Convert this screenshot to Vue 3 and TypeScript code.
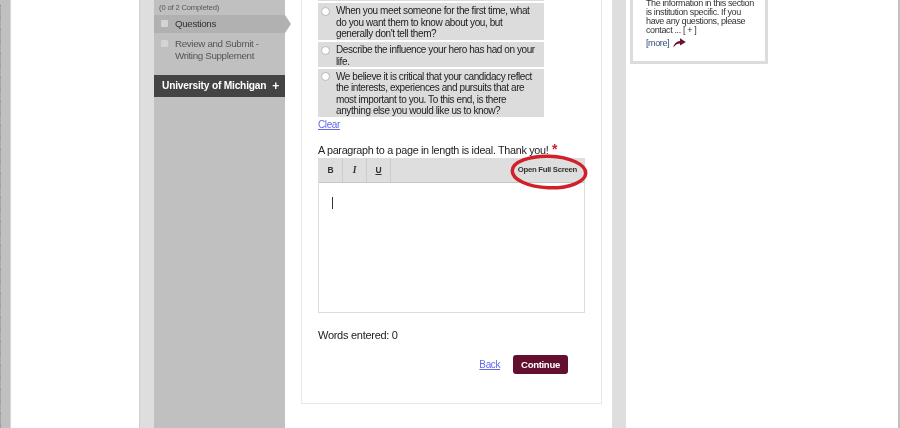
<script setup lang="ts">
const prompts: string[] = [
  'When you meet someone for the first time, what do you want them to know about you, but generally don\'t tell them?',
  'Describe the influence your hero has had on your life.',
  'We believe it is critical that your candidacy reflect the interests, experiences and pursuits that are most important to you. To this end, is there anything else you would like us to know?',
]
const tools = [
  { label: 'B', cls: 'bold' },
  { label: 'I', cls: 'italic' },
  { label: 'U', cls: 'under' },
]
</script>

<template>
  <div class="page">
    <div class="edge-left"></div>
    <div class="gutter"></div>
    <div class="rail"></div>

    <aside class="sidebar">
      <div class="completed">(0 of 2 Completed)</div>
      <div class="step active">
        <span class="check"></span>
        <span>Questions</span>
      </div>
      <div class="step">
        <span class="check"></span>
        <span>Review and Submit -<br />Writing Supplement</span>
      </div>
      <div class="school">
        <span>University of Michigan</span>
        <span class="plus">+</span>
      </div>
    </aside>

    <main class="main">
      <section class="card">
        <div class="options">
          <div v-for="p in prompts" :key="p" class="option">
            <span class="radio"></span>
            <span class="option-text">{{ p }}</span>
          </div>
        </div>
        <a class="clear" href="#">Clear</a>

        <div class="label">A paragraph to a page in length is ideal. Thank you! <span class="req">*</span></div>
        <div class="editor">
          <div class="toolbar">
            <button v-for="t in tools" :key="t.label" type="button" class="tool" :class="t.cls">{{ t.label }}</button>
            <span class="fullscreen">Open Full Screen</span>
            <svg class="circle" width="82" height="42" viewBox="0 0 82 42">
              <ellipse cx="41" cy="21" rx="36.75" ry="15.75" fill="none" stroke="#d0202a" stroke-width="3.5" transform="rotate(2 41 21)" />
            </svg>
          </div>
          <div class="editor-body"><span class="caret"></span></div>
        </div>

        <div class="words">Words entered: 0</div>
        <div class="actions">
          <a class="back" href="#">Back</a>
          <button type="button" class="continue">Continue</button>
        </div>
      </section>
    </main>

    <div class="rail"></div>

    <div class="right">
      <div class="info">
        <p>The information in this section<br />is institution specific. If you<br />have any questions, please<br />contact ... [ + ]</p>
        <div class="more">
          <span>[more]</span>
          <svg width="13" height="10" viewBox="0 0 13 10">
            <path d="M0.3 9.6C0.8 6 3 3.4 7 2.9V0.3L12.8 4L7 7.6V5.4C4.4 5.3 2.2 6.8 0.3 9.6Z" fill="#6b1230" />
          </svg>
        </div>
      </div>
    </div>
    <div class="edge-right"></div>
  </div>
</template>

<style scoped>
.page {
  display: flex;
  width: 900px;
  height: 428px;
  overflow: hidden;
  background: #fff;
  font-family: "Liberation Sans", Arial, sans-serif;
  color: #333;
  filter: blur(0.35px);
}
.edge-left {
  width: 11px;
  flex: none;
  background:
    repeating-linear-gradient(to bottom, #8a8a8a 0 1px, #a8a8a8 1px 12px) 0 5px / 1px 100% no-repeat,
    #c0c0c0;
  border-right: 1px solid #d8d8d8;
  box-sizing: border-box;
}
.gutter {
  width: 129px;
  flex: none;
  border-right: 1px solid #cfcfcf;
  box-sizing: border-box;
}
.rail {
  width: 14px;
  flex: none;
  background: #dedede;
}
.sidebar {
  width: 131px;
  flex: none;
  background: #c0c0c0;
  color: #555;
}
.completed {
  padding: 4px 0 0 5px;
  height: 15px;
  box-sizing: border-box;
  font-size: 7.6px;
  letter-spacing: -0.15px;
  line-height: 8px;
}
.step {
  display: flex;
  gap: 7px;
  padding-left: 7px;
  font-size: 9.8px;
  letter-spacing: -0.35px;
  line-height: 12px;
  position: relative;
}
.step.active {
  height: 18px;
  box-sizing: border-box;
  padding-top: 3px;
  background: #b1b1b1;
  color: #333;
  margin-bottom: 5px;
}
.step.active::after {
  content: "";
  position: absolute;
  left: 100%;
  top: 0;
  border-left: 6px solid #b1b1b1;
  border-top: 9px solid transparent;
  border-bottom: 9px solid transparent;
}
.check {
  width: 7px;
  height: 7px;
  margin-top: 2px;
  flex: none;
  background: #d4d4d4;
  border-radius: 1px;
}
.school {
  display: flex;
  justify-content: space-between;
  height: 22px;
  margin-top: 13px;
  padding: 0 6px 0 8px;
  background: #444;
  color: #fff;
  font-size: 10.2px;
  letter-spacing: -0.2px;
  font-weight: bold;
  line-height: 22px;
  white-space: nowrap;
}
.plus {
  font-size: 12px;
}
.main {
  width: 327px;
  flex: none;
  padding-left: 16px;
  box-sizing: border-box;
}
.card {
  width: 301px;
  height: 404px;
  box-sizing: border-box;
  padding: 0 16px;
  border: 1px solid #e8e8e8;
  border-top: 0;
}
.options {
  width: 226px;
  padding-top: 2px;
  border-top: 1px solid #dcdcdc;
}
.option {
  display: flex;
  gap: 6px;
  padding: 2.3px 5px 0 3px;
  margin-bottom: 1.5px;
  box-sizing: border-box;
  background: #dcdcdc;
  color: #222;
  font-size: 10px;
  letter-spacing: -0.41px;
  line-height: 11.4px;
}
.option:first-child {
  height: 37px;
}
.option:nth-child(2) {
  height: 25.5px;
  padding-top: 2.8px;
}
.option:last-child {
  height: 48px;
  margin-bottom: 0;
}
.radio {
  width: 7px;
  height: 7px;
  flex: none;
  background: #fff;
  border: 1px solid #b8b8b8;
  border-radius: 50%;
  margin-top: 1.5px;
}
.clear,
.back {
  color: #5f68ea;
  text-decoration: underline;
  font-size: 10px;
  letter-spacing: -0.4px;
}
.clear {
  display: block;
  margin-top: 2px;
  line-height: 12px;
}
.label {
  margin-top: 12px;
  font-size: 10.8px;
  letter-spacing: -0.31px;
  line-height: 14px;
  color: #222;
  white-space: nowrap;
}
.req {
  color: #d0202a;
  font-size: 14px;
  font-weight: bold;
  line-height: 10px;
  margin-left: 1px;
}
.editor {
  width: 267px;
  height: 155px;
  margin-top: 1px;
  box-sizing: border-box;
  border: 1px solid #dcdcdc;
  border-top: 0;
}
.toolbar {
  display: flex;
  align-items: center;
  height: 24px;
  background: #dedede;
  border-bottom: 1.5px solid #c8c8c8;
  position: relative;
}
.tool {
  width: 24px;
  height: 100%;
  padding: 0;
  border: 0;
  border-right: 1px solid #ccc;
  background: transparent;
  color: #333;
  font-family: inherit;
  font-size: 8.5px;
  font-weight: bold;
}
.tool.italic {
  font-style: italic;
  font-family: "Liberation Serif", serif;
  font-size: 9.5px;
}
.tool.under {
  text-decoration: underline;
}
.fullscreen {
  margin-left: auto;
  margin-right: 7px;
  color: #333;
  font-size: 7.8px;
  letter-spacing: -0.3px;
  font-weight: bold;
}
.circle {
  position: absolute;
  right: -5.5px;
  top: -6.5px;
}
.editor-body {
  padding: 14px 13px;
}
.caret {
  display: block;
  width: 1px;
  height: 12px;
  background: #333;
}
.words {
  margin-top: 15px;
  font-size: 11px;
  letter-spacing: -0.28px;
  line-height: 14px;
  color: #222;
}
.actions {
  display: flex;
  justify-content: flex-end;
  align-items: center;
  gap: 13px;
  margin-top: 13px;
  padding-right: 17px;
}
.continue {
  width: 55px;
  height: 19px;
  padding: 0;
  border: 0;
  border-radius: 3px;
  background: #631030;
  color: #fff;
  font-family: inherit;
  font-size: 9.6px;
  letter-spacing: -0.35px;
  font-weight: bold;
}
.right {
  flex: 1;
  padding-left: 4px;
}
.info {
  width: 138px;
  height: 68px;
  margin-top: -4.5px;
  box-sizing: border-box;
  padding: 0 0 0 13px;
  border: 3px solid #dcdcdc;
  font-size: 9px;
  letter-spacing: -0.38px;
  line-height: 9.3px;
  color: #333;
  white-space: nowrap;
}
.info p {
  margin: 0;
}
.more {
  display: flex;
  align-items: center;
  gap: 4px;
  margin-top: 2.5px;
  color: #33507a;
}
.edge-right {
  width: 2px;
  flex: none;
  background: #c0c0c0;
}
</style>
